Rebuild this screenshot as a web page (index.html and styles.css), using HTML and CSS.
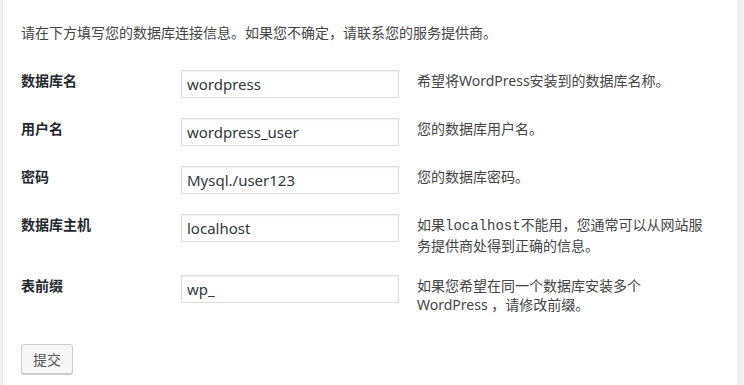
FILE: index.html
```html
<!DOCTYPE html>
<html lang="zh-CN">
<head>
    <meta charset="UTF-8">
    <meta name="viewport" content="width=device-width, initial-scale=1.0">
    <title>WordPress › 安装配置文件</title>
    <link rel="stylesheet" href="styles.css">
</head>
<body>
    <div class="wrap">
        <p class="intro">请在下方填写您的数据库连接信息。如果您不确定，请联系您的服务提供商。</p>

        <table class="form-table">
            <tr>
                <th>数据库名</th>
                <td class="field"><input type="text" value="wordpress"></td>
                <td class="desc">希望将WordPress安装到的数据库名称。</td>
            </tr>
            <tr>
                <th>用户名</th>
                <td class="field"><input type="text" value="wordpress_user"></td>
                <td class="desc">您的数据库用户名。</td>
            </tr>
            <tr>
                <th>密码</th>
                <td class="field"><input type="text" value="Mysql./user123"></td>
                <td class="desc">您的数据库密码。</td>
            </tr>
            <tr>
                <th>数据库主机</th>
                <td class="field"><input type="text" value="localhost"></td>
                <td class="desc">如果<code>localhost</code>不能用，您通常可以从网站服务提供商处得到正确的信息。</td>
            </tr>
            <tr>
                <th>表前缀</th>
                <td class="field"><input type="text" value="wp_"></td>
                <td class="desc">如果您希望在同一个数据库安装多个WordPress ，请修改前缀。</td>
            </tr>
        </table>

        <p class="step"><button type="submit" class="button">提交</button></p>
    </div>
</body>
</html>
```

FILE: styles.css
```css
body {
    margin: 0;
    padding: 0;
    background: #f1f1f1;
    font-family: "Noto Sans", "Noto Sans CJK SC", sans-serif;
    font-size: 14px;
    color: #444;
}
.wrap {
    margin-left: 2px;
    width: 737px;
    min-height: 400px;
    background: #fff;
    border-left: 1px solid #e5e5e5;
    border-right: 1px solid #e5e5e5;
    padding: 22px 0 0 18px;
    box-sizing: border-box;
}
.intro {
    margin: 0 0 17px 0;
    line-height: 21px;
}
.form-table {
    border-collapse: collapse;
    border-spacing: 0;
}
.form-table th {
    width: 140px;
    padding: 10px 20px 10px 0;
    text-align: left;
    vertical-align: top;
    font-weight: bold;
    line-height: 21px;
    color: #23282d;
}
.form-table td {
    vertical-align: top;
}
.field {
    padding: 10px 18px 10px 0;
}
.field input {
    display: block;
    width: 218px;
    height: 28px;
    box-sizing: border-box;
    margin: 0;
    padding: 3px 5px;
    font-family: "Noto Sans", "Noto Sans CJK SC", sans-serif;
    font-size: 15px;
    color: #32373c;
    border: 1px solid #ddd;
    box-shadow: inset 0 1px 2px rgba(0, 0, 0, 0.07);
    outline: none;
}
.desc {
    width: 290px;
    padding: 11px 0 10px 0;
    line-height: 19px;
}
.desc code {
    font-family: "Liberation Mono", monospace;
    font-size: 14px;
}
.step {
    margin: 20px 0 0 0;
}
.button {
    width: 52px;
    height: 30px;
    padding: 0;
    font-family: "Noto Sans CJK SC", sans-serif;
    font-size: 14px;
    color: #555;
    background: #f7f7f7;
    border: 1px solid #ccc;
    border-radius: 3px;
    box-shadow: 0 1px 0 #ccc;
}
```
